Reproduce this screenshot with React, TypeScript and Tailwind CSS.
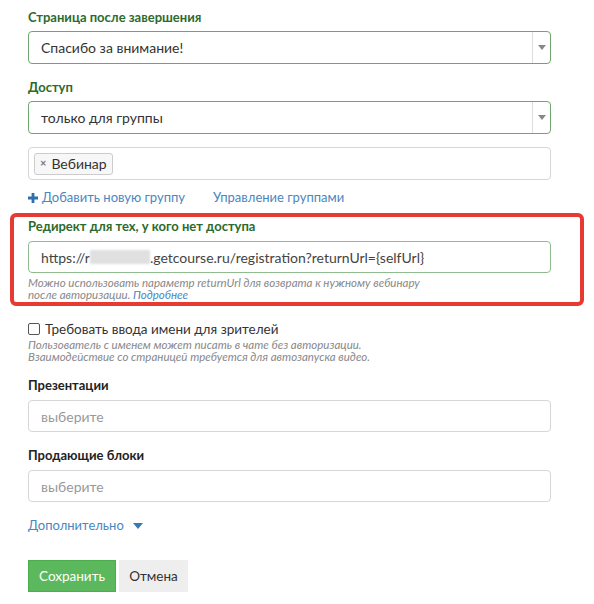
import { useState } from "react";

const font = { fontFamily: 'Lato, "Liberation Sans", sans-serif' };

function Caret() {
  return (
    <span className="flex h-full w-[18px] items-center justify-center border-l border-[#ddd]">
      <svg width="8" height="5" viewBox="0 0 8 5">
        <path d="M0 0h8L4 5z" fill="#888" />
      </svg>
    </span>
  );
}

function GreenSelect({ value }: { value: string }) {
  return (
    <div className="flex h-[33px] items-center justify-between rounded-[4px] border border-[#6fa56f] pl-3 text-[14px] text-[#333]">
      <span>{value}</span>
      <Caret />
    </div>
  );
}

function Placeholder({ text }: { text: string }) {
  return (
    <div className="flex h-[32px] items-center rounded-[4px] border border-[#d6d6d6] pl-3 text-[14px] text-[#999]">
      {text}
    </div>
  );
}

export default function App() {
  const [needName, setNeedName] = useState(false);

  return (
    <div className="min-h-screen bg-white" style={font}>
      <div className="w-[594px] pt-[8px] pr-[43px] pl-[28px]">
        <div className="text-[13px] leading-[18px] font-bold text-[#2d6a2d]">Страница после завершения</div>
        <div className="mt-[5px]">
          <GreenSelect value="Спасибо за внимание!" />
        </div>

        <div className="mt-[14px] text-[13px] leading-[18px] font-bold text-[#2d6a2d]">Доступ</div>
        <div className="mt-[5px]">
          <GreenSelect value="только для группы" />
        </div>

        <div className="mt-[13px] flex h-[33px] items-center rounded-[4px] border border-[#d6d6d6] px-[5px]">
          <span className="flex h-[22px] items-center gap-[5px] rounded-[3px] border border-[#ccc] bg-[#f7f7f7] px-[5px] text-[14px] text-[#333]">
            <span className="text-[11px] font-bold text-[#777]">×</span>
            Вебинар
          </span>
        </div>

        <div className="mt-[8px] flex h-[20px] items-center text-[13px] text-[#4a86c0]">
          <svg width="10" height="10" viewBox="0 0 10 10" className="mr-[4px]">
            <path d="M3.6 0h2.8v3.6H10v2.8H6.4V10H3.6V6.4H0V3.6h3.6z" fill="#2f6fb0" />
          </svg>
          <span>Добавить новую группу</span>
          <span className="ml-[28px]">Управление группами</span>
        </div>
      </div>

      <div className="mx-[10px] mt-[5px] w-[574px] rounded-[6px] border-[4px] border-[#e63a32] px-[14px] pb-[1px]">
        <div className="text-[13px] leading-[18px] font-bold text-[#2d6a2d]">Редирект для тех, у кого нет доступа</div>
        <div className="mt-[6px] flex h-[32px] w-[523px] items-center rounded-[4px] border border-[#8fbb8f] pl-3 text-[14px] text-[#444]">
          <span>https://r</span>
          <span className="inline-block h-[14px] w-[60px] bg-[#e0e0e0] blur-[1px]" />
          <span>.getcourse.ru/registration?returnUrl={"{selfUrl}"}</span>
        </div>
        <div className="mt-[4px] text-[11.5px] leading-[12px] italic text-[#888]">
          Можно использовать параметр returnUrl для возврата к нужному вебинару
          <br />
          после авторизации. <span className="text-[#4a86c0]">Подробнее</span>
        </div>
      </div>

      <div className="pr-[43px] pl-[28px]">
        <label className="mt-[13px] flex h-[20px] items-center gap-[5px] text-[13.5px] text-[#333]">
          <input
            type="checkbox"
            checked={needName}
            onChange={(e) => setNeedName(e.target.checked)}
            className="h-[12px] w-[12px] appearance-none rounded-[2px] border border-[#555] bg-white"
          />
          Требовать ввода имени для зрителей
        </label>
        <div className="text-[11.5px] leading-[12px] italic text-[#888]">
          Пользователь с именем может писать в чате без авторизации.
          <br />
          Взаимодействие со страницей требуется для автозапуска видео.
        </div>

        <div className="mt-[13px] text-[13px] leading-[18px] font-bold text-[#222]">Презентации</div>
        <div className="mt-[6px]">
          <Placeholder text="выберите" />
        </div>

        <div className="mt-[14px] text-[13px] leading-[18px] font-bold text-[#222]">Продающие блоки</div>
        <div className="mt-[6px]">
          <Placeholder text="выберите" />
        </div>

        <div className="mt-[14px] flex h-[20px] items-center gap-[9px] text-[13px] text-[#4a86c0]">
          Дополнительно
          <svg width="10" height="6" viewBox="0 0 10 6">
            <path d="M0 0h10L5 6z" fill="#3a78b8" />
          </svg>
        </div>

        <div className="mt-[24px] flex gap-[3px]">
          <button className="h-[32px] w-[88px] border border-[#4cae4c] bg-[#5cb85c] text-[13.5px] text-white">
            Сохранить
          </button>
          <button className="h-[32px] w-[69px] bg-[#eeeeee] text-[13.5px] text-[#333]">Отмена</button>
        </div>
      </div>
    </div>
  );
}
